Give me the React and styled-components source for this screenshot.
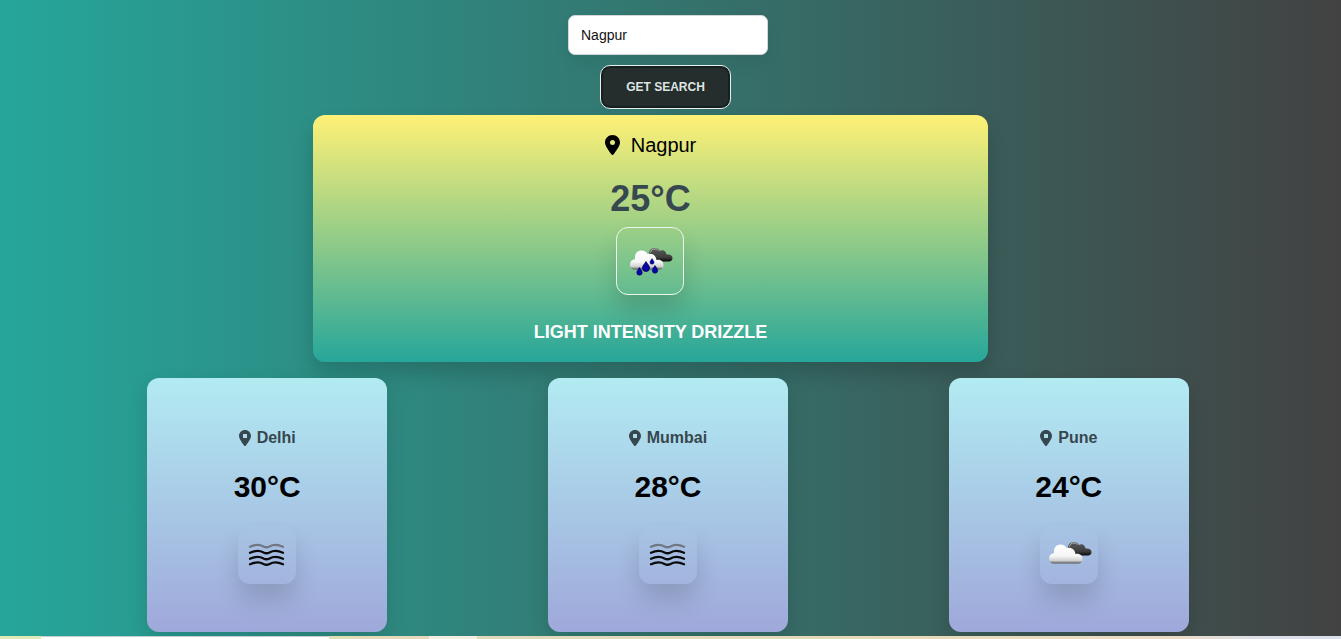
import React, { useState } from "react";
import styled, { createGlobalStyle } from "styled-components";

const GlobalStyle = createGlobalStyle`
  *, *::before, *::after { box-sizing: border-box; }
  body {
    margin: 0;
    font-family: "Liberation Sans", Arial, sans-serif;
    color: #000;
  }
`;

const Page = styled.div`
  display: flex;
  flex-direction: column;
  min-height: 100vh;
  background: linear-gradient(to right, #26a69a, #424242);
`;

const Content = styled.main`
  display: flex;
  flex: 1;
  flex-direction: column;
  align-items: center;
  padding: 15px 5px 4px 0;
`;

const SearchForm = styled.form`
  display: flex;
  flex-direction: column;
  align-items: center;
  gap: 10px;
`;

const CityInput = styled.input`
  width: 200px;
  height: 40px;
  padding: 0 12px;
  border: 1px solid #d3d7da;
  border-radius: 7px;
  background: #fff;
  color: #111;
  font: 14px "Liberation Sans", Arial, sans-serif;
  box-shadow: 0 8px 16px rgba(0, 0, 0, 0.06);
  outline: none;
`;

const SearchButton = styled.button`
  height: 44px;
  margin-right: 5px;
  padding: 0 25px;
  border: 1px solid #e8f0ef;
  border-radius: 10px;
  background: #262d2d;
  box-shadow: inset 0 0 0 2px #172020;
  color: #dde5e4;
  font: bold 12px "Liberation Sans", Arial, sans-serif;
  text-transform: uppercase;
`;

const CurrentCard = styled.section`
  display: flex;
  flex-direction: column;
  align-items: center;
  width: 50.5%;
  margin: 6px 35px 16px 0;
  padding: 18px 0 19px;
  border-radius: 12px;
  background: linear-gradient(#fff176, #26a69a);
  box-shadow: 0 12px 20px rgba(0, 0, 0, 0.16);
`;

const Place = styled.h2`
  display: flex;
  align-items: center;
  gap: ${(p) => (p.$large ? "11px" : "6px")};
  margin: 0;
  color: ${(p) => (p.$large ? "#000" : "#37474f")};
  font-size: ${(p) => (p.$large ? "20px" : "16px")};
  font-weight: ${(p) => (p.$large ? 400 : 700)};
  line-height: 24px;
`;

const Temperature = styled.p`
  margin: ${(p) => (p.$large ? "19px 0 5px" : "19px 0 21px")};
  color: ${(p) => (p.$large ? "#37474f" : "#000")};
  font-size: ${(p) => (p.$large ? "36px" : "30px")};
  font-weight: 700;
  line-height: ${(p) => (p.$large ? "46px" : "36px")};
`;

const WeatherFrame = styled.div`
  display: flex;
  align-items: center;
  justify-content: center;
  width: ${(p) => (p.$large ? "68px" : "58px")};
  height: ${(p) => (p.$large ? "68px" : "58px")};
  border: ${(p) => (p.$large ? "1px solid #eef5ee" : "0")};
  border-radius: 12px;
  box-shadow: 0 16px 24px rgba(0, 0, 0, 0.14);
`;

const Description = styled.p`
  margin: 26px 0 0;
  color: #fff;
  font-size: 18px;
  font-weight: 700;
  line-height: 22px;
  text-transform: uppercase;
`;

const CityList = styled.div`
  display: flex;
  justify-content: space-around;
  width: 90%;
`;

const CityCard = styled.section`
  display: flex;
  flex-direction: column;
  align-items: center;
  width: 240px;
  padding: 48px 0;
  border-radius: 12px;
  background: linear-gradient(#b2ebf2, #9fa8da);
  box-shadow: 0 8px 20px rgba(0, 0, 0, 0.12);
`;

const Dock = styled.footer`
  display: flex;
  height: 3px;
`;

const DockPart = styled.div`
  flex: ${(p) => p.$size};
  background: ${(p) => p.$fill};
  border-top: ${(p) => (p.$outlined ? "1px solid #c4cdd2" : "0")};
`;

function Pin({ size, square }) {
  return (
    <svg width={size * 0.75} height={size} viewBox="0 0 384 512" fill="currentColor" aria-hidden="true">
      <path
        fillRule="evenodd"
        d={
          square
            ? "M192 0C86 0 0 86 0 192c0 88 117 243 169 308a30 30 0 0 0 46 0c52-65 169-220 169-308C384 86 298 0 192 0zM128 128h128v128H128z"
            : "M192 0C86 0 0 86 0 192c0 88 117 243 169 308a30 30 0 0 0 46 0c52-65 169-220 169-308C384 86 298 0 192 0zm0 128a64 64 0 1 1 0 128 64 64 0 0 1 0-128z"
        }
      />
    </svg>
  );
}

const drops = [
  [11.5, 21.5, 1],
  [18, 15.5, 1.3],
  [24, 12.5, 0.75],
  [27, 19.5, 1],
];

function Clouds({ rain }) {
  const id = rain ? "rain" : "cloud";
  return (
    <svg width="46" height="30" viewBox="-1 0 46 30" aria-hidden="true">
      <defs>
        <linearGradient id={`${id}-light`} x1="0" y1="0" x2="0" y2="1">
          <stop offset="0" stopColor="#fff" />
          <stop offset="0.6" stopColor="#f6f6f6" />
          <stop offset="0.85" stopColor="#d0d0d0" />
          <stop offset="1" stopColor="#555" />
        </linearGradient>
        <linearGradient id={`${id}-dark`} x1="0" y1="0" x2="0" y2="1">
          <stop offset="0" stopColor="#5c5c5c" />
          <stop offset="0.7" stopColor="#3c3c3c" />
          <stop offset="1" stopColor="#080808" />
        </linearGradient>
      </defs>
      <path
        d="M21 8C21 4 23.500 2 27 2c2 0 4 1 5 3 3-2 6 0 6.500 3.500C42 8 44.500 9.500 44.500 12c0 2-1.500 3.500-3.500 3.500H27c-4 0-6-3-6-7.500z"
        fill={`url(#${id}-dark)`}
      />
      <path d="M22.500 6.500C23 4 24.500 3 27 3c1.500 0 2.500.5 3.200 1.500" fill="none" stroke="#c0c0c0" strokeWidth="0.900" />
      <path
        d="M7 23.500C4 23.500 2 21.500 2 18.500S4 13.500 7 13C6.500 8 9 4.500 13.500 4.500c3 0 5 1.500 6 3.500 5-1 8.500 1.500 9 6 4-1 7 1.500 7 5 0 2.500-1.500 4.500-4 4.500z"
        fill={`url(#${id}-light)`}
      />
      {rain &&
        drops.map(([x, y, scale]) => (
          <path
            key={x}
            transform={`translate(${x} ${y}) scale(${scale})`}
            d="M0 0c1 2 2.700 3 2.700 5a2.700 2.700 0 0 1-5.400 0c0-2 1.700-3 2.700-5z"
            fill="#0505a8"
            stroke="#000058"
            strokeWidth="0.600"
          />
        ))}
    </svg>
  );
}

function Mist() {
  return (
    <svg width="38" height="24" viewBox="0 0 38 24" fill="none" strokeWidth="2.300" strokeLinecap="round" aria-hidden="true">
      {[3, 9, 15, 20.5].map((y, i) => (
        <path
          key={y}
          d={`M2 ${y + 0.8}C8 ${y - 2} 12 ${y - 1.5} 15.500 ${y + 0.5}Q18.500 ${y + 2} 21.500 ${y + 0.5}C25 ${y - 1.5} 29 ${y - 2} 35 ${y + 0.8}`}
          stroke={i === 0 ? "#71777f" : "#0a0a0c"}
        />
      ))}
    </svg>
  );
}

const cities = [
  { name: "Delhi", temp: 30, icon: <Mist /> },
  { name: "Mumbai", temp: 28, icon: <Mist /> },
  { name: "Pune", temp: 24, icon: <Clouds /> },
];

const dockParts = [
  { size: 41, fill: "#dfeab6" },
  { size: 288, fill: "#ffffff", outlined: true },
  { size: 100, fill: "linear-gradient(to right, #dfe0b4, #e8d8bd)" },
  { size: 48, fill: "#f4efe2" },
  { size: 864, fill: "linear-gradient(to right, #e0dabb, #e6dab8 45%, #ecdcc6 80%, #dadfeb 92%)" },
];

export default function App() {
  const [city, setCity] = useState("Nagpur");
  return (
    <>
      <GlobalStyle />
      <Page>
        <Content>
          <SearchForm onSubmit={(e) => e.preventDefault()}>
            <CityInput aria-label="City" value={city} onChange={(e) => setCity(e.target.value)} />
            <SearchButton type="submit">Get Search</SearchButton>
          </SearchForm>
          <CurrentCard>
            <Place $large>
              <Pin size={20} />
              Nagpur
            </Place>
            <Temperature $large>25°C</Temperature>
            <WeatherFrame $large>
              <Clouds rain />
            </WeatherFrame>
            <Description>light intensity drizzle</Description>
          </CurrentCard>
          <CityList>
            {cities.map(({ name, temp, icon }) => (
              <CityCard key={name}>
                <Place>
                  <Pin size={16} square />
                  {name}
                </Place>
                <Temperature>{temp}°C</Temperature>
                <WeatherFrame>{icon}</WeatherFrame>
              </CityCard>
            ))}
          </CityList>
        </Content>
        <Dock>
          {dockParts.map(({ size, fill, outlined }) => (
            <DockPart key={size} $size={size} $fill={fill} $outlined={outlined} />
          ))}
        </Dock>
      </Page>
    </>
  );
}
